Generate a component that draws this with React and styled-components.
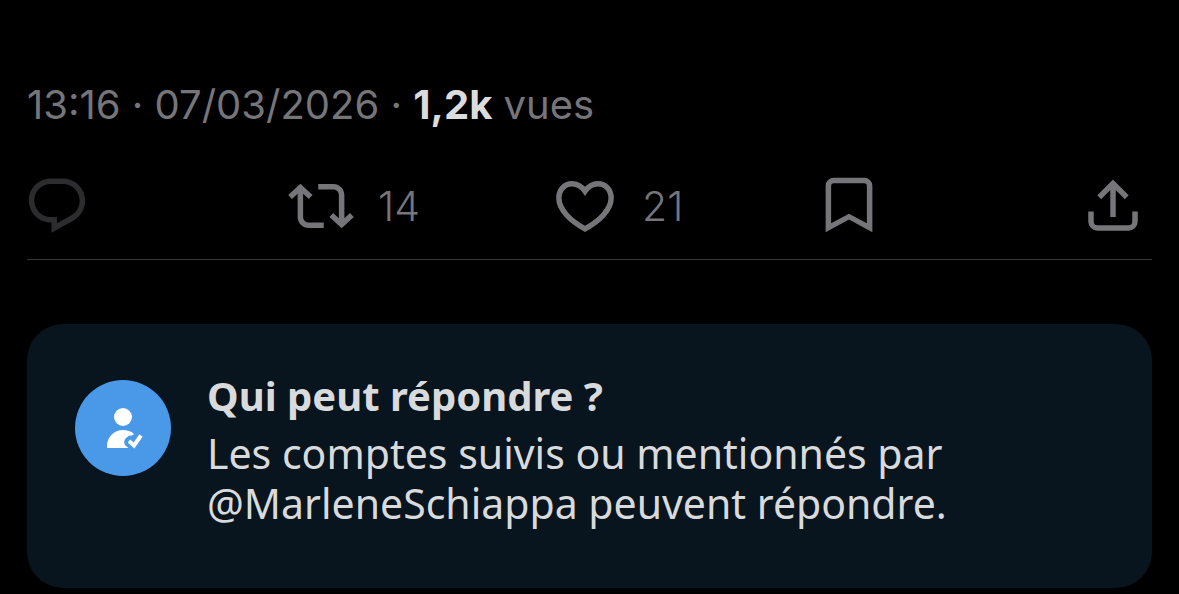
import React from 'react'
import styled, { createGlobalStyle } from 'styled-components'

const actions = [
    {
        label: 'Répondre',
        disabled: true,
        path: 'M1.751 10c0-4.42 3.584-8 8.005-8h4.366c4.49 0 8.129 3.64 8.129 8.13 0 2.96-1.607 5.68-4.196 7.11l-8.054 4.46v-3.69h-.067c-4.49.1-8.183-3.51-8.183-8.01zm8.005-6c-3.317 0-6.005 2.69-6.005 6 0 3.37 2.77 6.08 6.138 6.01l.351-.01h1.761v2.3l5.087-2.81c1.951-1.08 3.163-3.13 3.163-5.36 0-3.39-2.744-6.13-6.129-6.13H9.756z',
    },
    {
        label: 'Reposter',
        count: 14,
        path: 'M4.5 3.88l4.432 4.14-1.364 1.46L5.5 7.55V16c0 1.1.896 2 2 2H13v2H7.5c-2.209 0-4-1.79-4-4V7.55L1.432 9.48.068 8.02 4.5 3.88zM16.5 6H11V4h5.5c2.209 0 4 1.79 4 4v8.45l2.068-1.93 1.364 1.46-4.432 4.14-4.432-4.14 1.364-1.46 2.068 1.93V8c0-1.1-.896-2-2-2z',
    },
    {
        label: "J'aime",
        count: 21,
        outline: true,
        path: 'M12 6.6C10.8 4.9 9.1 3.9 7.3 3.9 4.5 3.9 2.5 6.2 2.5 9.1c0 4.3 4.3 8.4 9.5 11.2 5.2-2.8 9.5-6.9 9.5-11.2 0-2.9-2-5.2-4.8-5.2-1.8 0-3.5 1-4.7 2.7z',
    },
    {
        label: 'Signet',
        path: 'M3.5 21.5V4.7a3 3 0 0 1 3-3h11a3 3 0 0 1 3 3v16.8L12 16.9zM5.5 18.3L12 14.8l6.5 3.5V4.7a1 1 0 0 0-1-1h-11a1 1 0 0 0-1 1z',
    },
    {
        label: 'Partager',
        path: 'M12 2.4l5.7 5.7-1.41 1.42L13 6.22V16h-2V6.22l-3.3 3.3L6.29 8.1 12 2.4zM3 14h2v3.6A1.4 1.4 0 0 0 6.4 19h11.2a1.4 1.4 0 0 0 1.4-1.4V14h2v3.6a3.4 3.4 0 0 1-3.4 3.4H6.4A3.4 3.4 0 0 1 3 17.6z',
    },
]

const App = () => {
    return (
        <Post>
            <Global />
            <Meta>
                <time dateTime="2026-03-07T13:16">13:16 · 07/03/2026</time> · <b>1,2k</b> vues
            </Meta>
            <Actions>
                {actions.map(({ label, count, disabled, outline, path }) => (
                    <Action key={label} type="button" aria-label={label} disabled={disabled}>
                        <Icon viewBox="0 0 24 24" $outline={outline} aria-hidden="true">
                            <path fillRule="evenodd" d={path} />
                        </Icon>
                        {count && <span>{count}</span>}
                    </Action>
                ))}
            </Actions>
            <Divider />
            <Notice>
                <Badge viewBox="0 0 96 96" aria-hidden="true">
                    <circle cx="48" cy="48" r="48" fill="#4a99e9" />
                    <circle cx="48" cy="37" r="9" fill="#fff" />
                    <path fill="#fff" d="M32 68v-2c0-9 7-16 16-16 4 0 8 1 11 4-1 2-4 1-6 2.500-4 2-5 7-2 9.500l2.500 2z" />
                    <path fill="none" stroke="#fff" strokeWidth="4" d="M54 61l5 4.500 7-10" />
                </Badge>
                <NoticeText>
                    <h2>Qui peut répondre ?</h2>
                    <p>Les comptes suivis ou mentionnés par @MarleneSchiappa peuvent répondre.</p>
                </NoticeText>
            </Notice>
        </Post>
    )
}

export default App

const Global = createGlobalStyle`
*{
    box-sizing: border-box;
}
body{
    margin: 0;
    background: #000;
    font-family: Inter, sans-serif;
}
`
const Post = styled.main`
    padding: 81px 27px 7px;
`
const Meta = styled.div`
    font-size: 40px;
    line-height: 48px;
    color: #75757a;
    b{
        font-weight: 700;
        color: #dcdcdc;
    }
`
const Actions = styled.div`
    display: flex;
    margin: 44px 6px 0 -3px;
`
const Action = styled.button`
    display: flex;
    flex: 1;
    align-items: center;
    gap: 24px;
    padding: 0;
    border: none;
    background: none;
    color: #75757a;
    font-family: inherit;
    font-size: 41px;
    font-weight: 300;
    line-height: 50px;
    cursor: pointer;
    &:last-child{
        flex: none;
    }
    &:disabled{
        color: #2c2c2e;
        cursor: default;
    }
`
const Icon = styled.svg`
    width: 66px;
    height: 66px;
    flex: none;
    fill: ${({ $outline }) => ($outline ? 'none' : 'currentColor')};
    stroke: ${({ $outline }) => ($outline ? 'currentColor' : 'none')};
    stroke-width: 2;
`
const Divider = styled.hr`
    height: 1px;
    margin: 20px 0 64px;
    border: none;
    background: #363638;
`
const Notice = styled.section`
    display: flex;
    align-items: flex-start;
    gap: 36px;
    padding: 48px 48px 60px;
    border-radius: 36px;
    background: #08141e;
`
const Badge = styled.svg`
    width: 96px;
    height: 96px;
    margin-top: 8px;
    flex: none;
`
const NoticeText = styled.div`
    font-family: "Noto Sans", sans-serif;
    font-size: 41px;
    line-height: 50px;
    color: #d8dadb;
    h2{
        margin: 0;
        font-size: 40px;
        font-weight: 700;
        line-height: 48px;
    }
    p{
        margin: 8px 0 0;
    }
`
